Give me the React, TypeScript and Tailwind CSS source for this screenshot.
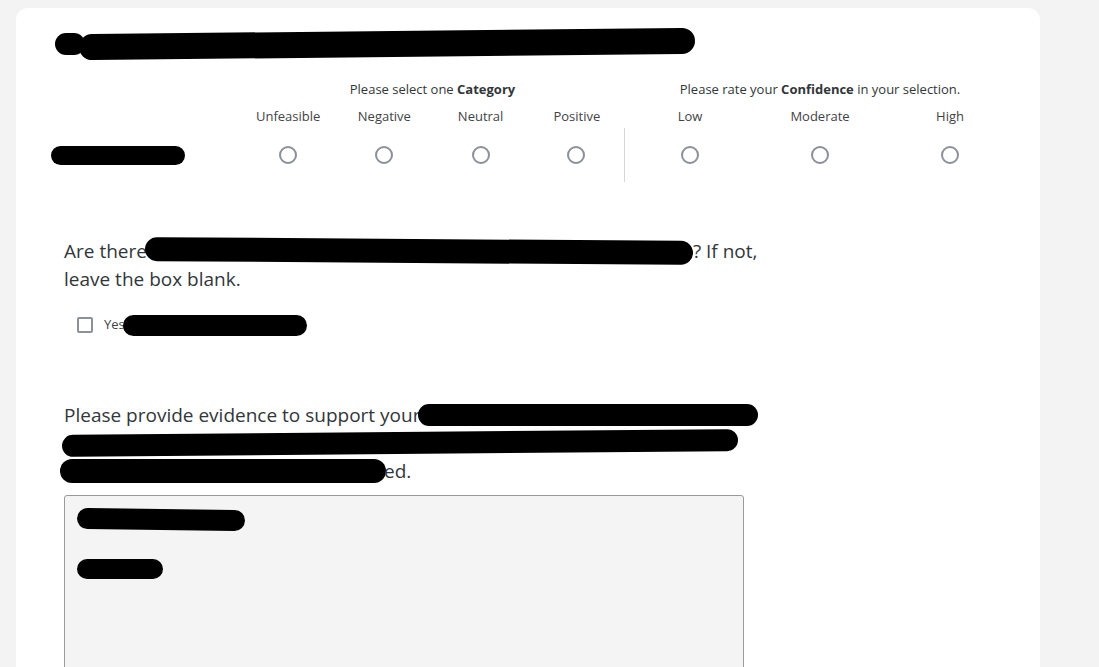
import React from "react";

const categories = ["Unfeasible", "Negative", "Neutral", "Positive"];
const confidence = ["Low", "Moderate", "High"];

function Blot({ className }: { className: string }) {
  return <span className={`inline-block rounded-full bg-black align-middle ${className}`} />;
}

function Radio() {
  return <span className="block h-[18px] w-[18px] rounded-full border-2 border-[#8b9198] bg-white" />;
}

export default function App() {
  return (
    <div className="h-screen overflow-hidden bg-[#f3f3f3] pl-4 pt-2 text-[#32363a] [font-family:'Open_Sans','Noto_Sans',sans-serif]">
      <div className="h-[700px] w-[1024px] rounded-xl bg-white pt-6">
        {/* matrix title */}
        <div className="flex h-6 items-center pl-[39px]">
          <Blot className="h-[22px] w-[30px] -mr-[6px]" />
          <Blot className="h-[26px] w-[616px] -rotate-[0.6deg]" />
        </div>

        {/* matrix */}
        <div className="mt-6 grid grid-cols-[189px_repeat(4,96.25px)_repeat(3,130px)] pl-[35px] text-[13px]">
          <div />
          <div className="col-span-4 h-[18px] text-center leading-[18px]">
            Please select one <span className="font-bold">Category</span>
          </div>
          <div className="col-span-3 h-[18px] text-center leading-[18px]">
            Please rate your <span className="font-bold">Confidence</span> in your selection.
          </div>

          <div className="mt-[9px]" />
          {[...categories, ...confidence].map((c) => (
            <div key={c} className="mt-[9px] text-center leading-[18px] text-[#3f4347]">
              {c}
            </div>
          ))}

          <div className="mt-[3px] flex h-[54px] items-center">
            <Blot className="h-[19px] w-[134px]" />
          </div>
          {categories.map((c, i) => (
            <div
              key={c}
              className={`mt-[3px] flex h-[54px] items-center justify-center ${i === 3 ? "border-r border-[#d4d6d8]" : ""}`}
            >
              <Radio />
            </div>
          ))}
          {confidence.map((c) => (
            <div key={c} className="mt-[3px] flex h-[54px] items-center justify-center">
              <Radio />
            </div>
          ))}
        </div>

        {/* question 2 */}
        <div className="mt-[55px] pl-12 text-[19px] leading-7">
          <div className="flex h-7 items-center">
            <span>Are there</span>
            <Blot className="h-[24px] w-[548px] -ml-[2px] rotate-[0.4deg]" />
            <span>? If not,</span>
          </div>
          <div className="h-7">leave the box blank.</div>
        </div>

        <div className="mt-5 flex h-6 items-center pl-[61px] text-[13px]">
          <span className="h-4 w-4 rounded-[2px] border-2 border-[#8b9198]" />
          <span className="ml-[11px] text-[#3f4347]">Yes</span>
          <Blot className="h-[21px] w-[184px] -ml-[2px]" />
        </div>

        {/* question 3 */}
        <div className="mt-16 pl-12 text-[19px] leading-7">
          <div className="flex h-7 items-center">
            <span>Please provide evidence to support your</span>
            <Blot className="h-[22px] w-[340px] -ml-[2px]" />
          </div>
          <div className="flex h-7 items-center -ml-[2px]">
            <Blot className="h-[22px] w-[676px] rotate-[-0.5deg]" />
          </div>
          <div className="flex h-7 items-center -ml-[4px]">
            <Blot className="h-[24px] w-[326px]" />
            <span className="-ml-[2px]">ed.</span>
          </div>
        </div>

        <div className="ml-12 mt-[10px] h-[240px] w-[680px] rounded-[3px] border border-[#9a9a9a] bg-[#f4f4f4] pl-[12px] pt-[12px]">
          <div className="flex h-[22px] items-center">
            <Blot className="h-[21px] w-[168px] rotate-[0.7deg]" />
          </div>
          <div className="mt-[29px] flex h-5 items-center">
            <Blot className="h-[20px] w-[86px]" />
          </div>
        </div>
      </div>
    </div>
  );
}
